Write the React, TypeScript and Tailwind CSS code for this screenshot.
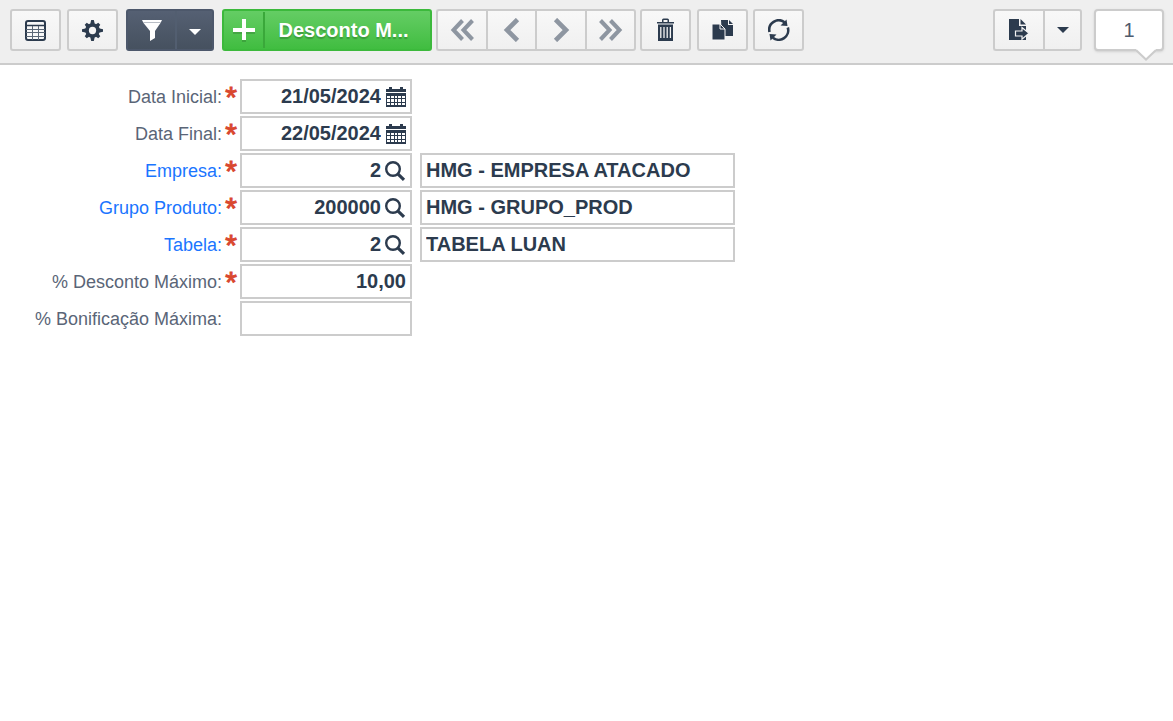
import type {ReactNode} from 'react';

const lightButton =
	'flex h-[42px] items-center justify-center border-2 border-[#ccc] bg-linear-to-b from-[#f8f8f8] to-[#f0f0f0] text-[#2c3b4e] hover:to-[#e4e4e4]';

function GridIcon() {
	return (
		<svg width="21" height="21" viewBox="0 0 21 21" fill="none" stroke="currentColor">
			<rect x="1" y="1" width="19" height="19" rx="2" fill="#f8f8f8" strokeWidth="2" />
			<path d="M1 5.5h19" strokeWidth="1.5" />
			<path d="M1 9.5h19M1 12.5h19M1 16.5h19M7.5 6v14M13.5 6v14" stroke="#5b6776" />
		</svg>
	);
}

function GearIcon() {
	return (
		<svg width="21" height="21" viewBox="0 0 22 22" fill="currentColor">
			{[0, 90].map((angle) => (
				<path key={angle} d="M9.6 0h2.8l1 4.5v13l-1 4.5H9.6l-1-4.5v-13z" transform={`rotate(${angle} 11 11)`} />
			))}
			{[45, 135].map((angle) => (
				<path key={angle} d="M9.5 1h3l.8 4.2v11.6l-.8 4.2h-3l-.8-4.2V5.2z" transform={`rotate(${angle} 11 11)`} />
			))}
			<circle cx="11" cy="11" r="7.6" />
			<circle cx="11" cy="11" r="3.8" fill="#f5f5f5" />
		</svg>
	);
}

function FunnelIcon() {
	return (
		<svg width="20" height="21" viewBox="0 0 20 21" fill="#fff">
			<path d="M0 0h20l-1 2H1zM1.5 3h17L13 11v7l-5 3V11z" />
			<path d="M1 2h18v1H1z" fill="#b9bec6" />
		</svg>
	);
}

function Caret() {
	return (
		<svg width="12" height="6" viewBox="0 0 12 6" fill="currentColor">
			<path d="M0 0h12L6 6z" />
		</svg>
	);
}

function PlusIcon() {
	return (
		<svg width="22" height="22" viewBox="0 0 22 22" fill="#fff" className="drop-shadow-[0_2px_0_rgba(0,0,0,0.15)]">
			<path d="M9 0h4v9h9v4h-9v8H9v-8H0V9h9z" />
		</svg>
	);
}

function Chevrons({double, flip}: {double?: boolean; flip?: boolean}) {
	return (
		<svg
			width="24"
			height="24"
			viewBox="0 0 24 24"
			fill="none"
			stroke="#8e96a1"
			strokeWidth={double ? 4 : 4.6}
			className={flip ? 'rotate-180' : ''}
		>
			{double ? <path d="M12.5 2.5L3.5 12l9 9.5M22.5 2.5l-9 9.5 9 9.5" /> : <path d="M17.5 1.5L7 12l10.5 10.5" />}
		</svg>
	);
}

function TrashIcon() {
	return (
		<svg width="18" height="24" viewBox="0 0 18 24" fill="currentColor">
			<path d="M5 4V2Q5 .5 6.5 .5h4Q12 .5 12 2v2h-1.5V2h-4v2z" />
			<path d="M0 4h17v1.5H0z" />
			<path d="M1 5.5h15V7H1z" fill="#8f98a3" />
			<path d="M1 7h15v16H1z" />
			<path d="M3.8 9v11M7 9v11M10.2 9v11M13.4 9v11" stroke="#f4f4f4" strokeWidth="1.3" />
		</svg>
	);
}

function CopyIcon() {
	return (
		<svg width="22" height="22" viewBox="0 0 22 22" fill="currentColor">
			<path d="M9 1h7v5h5v11H10z" />
			<path d="M17 1l4 4h-4z" />
			<path d="M0 5h8l5 5v11H0z" stroke="#f6f6f6" />
			<path d="M8 5v5h5" fill="none" stroke="#f6f6f6" />
		</svg>
	);
}

function RefreshIcon() {
	return (
		<svg width="22" height="22" viewBox="0 0 22 22" fill="currentColor">
			<path
				d="M1.5 13A9.5 9.5 0 0 1 16.5 3.3M19.8 8.5A9.5 9.5 0 0 1 4.8 18.7"
				fill="none"
				stroke="currentColor"
				strokeWidth="2.6"
			/>
			<path d="M18.5 .5l1 6.5-7-.6zM2.500 21.5l-1-6.5 7 .6z" />
		</svg>
	);
}

function ExportIcon() {
	return (
		<svg width="20" height="22" viewBox="0 0 20 22" fill="currentColor">
			<path d="M0 0h10v7h7v14H0z" />
			<path d="M11.5 0L17 5.5h-5.5z" />
			<path d="M6.5 12H13V8.5l7 5.8-7 5.8V17H6.500z" stroke="#f4f4f4" strokeWidth="1.2" />
		</svg>
	);
}

function CalendarIcon() {
	return (
		<svg width="20" height="20" viewBox="0 0 20 20" fill="currentColor">
			<path d="M3 0h3v2h8V0h3v2h3v3H0V2h3z" />
			<path d="M0 6h20v14H0z" />
			<path
				d="M1 9h3v2H1zM5 9h3v2H5zM9 9h2v2H9zM12 9h3v2h-3zM16 9h3v2h-3zM1 12h3v3H1zM5 12h3v3H5zM9 12h2v3H9zM12 12h3v3h-3zM16 12h3v3h-3zM1 16h3v2H1zM5 16h3v2H5zM9 16h2v2H9zM12 16h3v2h-3zM16 16h3v2h-3z"
				fill="#fff"
			/>
		</svg>
	);
}

function SearchIcon() {
	return (
		<svg width="21" height="20" viewBox="0 0 21 20" fill="none" stroke="currentColor">
			<circle cx="8" cy="8" r="6.8" strokeWidth="2.4" />
			<path d="M12.8 12.8l6.2 6" strokeWidth="3.2" />
		</svg>
	);
}

type FieldProps = {
	id: string;
	label: string;
	value: string;
	required?: boolean;
	link?: boolean;
	icon?: ReactNode;
	iconLabel?: string;
	description?: string;
};

function Field({id, label, value, required, link, icon, iconLabel, description}: FieldProps) {
	return (
		<div className="flex h-[35px] items-center">
			<label htmlFor={id} className="w-[222px] shrink-0 text-right text-lg text-[#5a6577]">
				{link ? (
					<a href={`#${id}`} className="text-[#1a75ff]">
						{label}
					</a>
				) : (
					label
				)}
			</label>
			<span className="flex h-full w-[18px] shrink-0 justify-center text-[30px] leading-9 text-[#d9472f] [-webkit-text-stroke:1px_#d9472f]">
				{required && '*'}
			</span>
			<div className="flex h-full w-[172px] shrink-0 items-center border-2 border-[#ccc] bg-white pr-1 text-[#2c3b4e]">
				<input
					id={id}
					defaultValue={value}
					className="h-full w-full min-w-0 text-right text-xl font-bold outline-none"
				/>
				{icon && (
					<button type="button" aria-label={iconLabel} className="ml-1 flex w-[21px] shrink-0 justify-end">
						{icon}
					</button>
				)}
			</div>
			{description && (
				<input
					readOnly
					aria-label={`${label} descrição`}
					value={description}
					className="ml-2 h-full w-[315px] min-w-0 border-2 border-[#ccc] bg-white px-1 text-xl font-bold text-[#2c3b4e] outline-none"
				/>
			)}
		</div>
	);
}

export default function App() {
	return (
		<div className="min-h-screen bg-white font-['Liberation_Sans',Arial,sans-serif]">
			<header className="flex h-[65px] items-start justify-between border-b-2 border-[#ccc] bg-[#efefef] pt-[9px] pr-[9px] pl-[10px]">
				<div className="flex">
					<button aria-label="Modo grade" className={`${lightButton} mr-1.5 w-[51px] rounded-[3px]`}>
						<GridIcon />
					</button>
					<button aria-label="Configurações" className={`${lightButton} mr-2 w-[51px] rounded-[3px]`}>
						<GearIcon />
					</button>
					<div className="mr-2 flex h-[42px] w-[88px] overflow-hidden rounded-[3px] border-2 border-[#4d586b] bg-linear-to-b from-[#556073] to-[#46515f] text-white">
						<button aria-label="Filtro" className="flex w-[49px] items-center justify-center border-r-2 border-[#525e70]">
							<FunnelIcon />
						</button>
						<button aria-label="Opções de filtro" className="flex flex-1 items-center justify-center pt-1">
							<Caret />
						</button>
					</div>
					<button className="mr-1 flex h-[42px] w-[210px] items-center rounded-[3px] border-2 border-[#3cb93c] bg-linear-to-b from-[#64cd64] to-[#40bd40] text-xl font-bold text-white">
						<span className="flex h-9 w-[41px] items-center justify-center border-r-2 border-[#3aa83a]">
							<PlusIcon />
						</span>
						<span className="flex-1 pr-2 text-center [text-shadow:0_2px_1px_rgba(0,0,0,0.2)]">Desconto M...</span>
					</button>
					<div className="mr-1 flex w-[200px]">
						<button aria-label="Primeiro" className={`${lightButton} w-[50px] rounded-l-[3px] border-r-0`}>
							<Chevrons double />
						</button>
						<button aria-label="Anterior" className={`${lightButton} w-[49px] border-r-0`}>
							<Chevrons />
						</button>
						<button aria-label="Próximo" className={`${lightButton} w-[50px] border-r-0`}>
							<Chevrons flip />
						</button>
						<button aria-label="Último" className={`${lightButton} w-[51px] rounded-r-[3px]`}>
							<Chevrons double flip />
						</button>
					</div>
					<button aria-label="Excluir" className={`${lightButton} mr-1.5 w-[51px] rounded-[3px]`}>
						<TrashIcon />
					</button>
					<button aria-label="Duplicar" className={`${lightButton} mr-[5px] w-[51px] rounded-[3px]`}>
						<CopyIcon />
					</button>
					<button aria-label="Atualizar" className={`${lightButton} w-[51px] rounded-[3px]`}>
						<RefreshIcon />
					</button>
				</div>

				<div className="flex gap-3">
					<div className="flex">
						<button aria-label="Exportar" className={`${lightButton} w-[50px] rounded-l-[3px] border-r-0`}>
							<ExportIcon />
						</button>
						<button aria-label="Opções de exportação" className={`${lightButton} w-[39px] rounded-r-[3px]`}>
							<Caret />
						</button>
					</div>
					<div className="relative flex h-[42px] w-[70px] items-center justify-center rounded-[4px] border-2 border-[#ccc] bg-white text-xl text-[#4f5b6d] shadow-sm">
						1
						<svg width="20" height="12" viewBox="0 0 20 12" className="absolute top-[38px] right-1.5">
							<path d="M0 0h20v1.5L10 10.5 0 1.5z" fill="#fff" />
							<path d="M0 1l10 9.5L20 1" fill="none" stroke="#ccc" strokeWidth="2" />
						</svg>
					</div>
				</div>
			</header>

			<form className="flex flex-col gap-0.5 pt-3.5">
				<Field id="data-inicial" label="Data Inicial:" value="21/05/2024" required icon={<CalendarIcon />} iconLabel="Abrir calendário" />
				<Field id="data-final" label="Data Final:" value="22/05/2024" required icon={<CalendarIcon />} iconLabel="Abrir calendário" />
				<Field id="empresa" label="Empresa:" value="2" required link icon={<SearchIcon />} iconLabel="Pesquisar" description="HMG - EMPRESA ATACADO" />
				<Field id="grupo-produto" label="Grupo Produto:" value="200000" required link icon={<SearchIcon />} iconLabel="Pesquisar" description="HMG - GRUPO_PROD" />
				<Field id="tabela" label="Tabela:" value="2" required link icon={<SearchIcon />} iconLabel="Pesquisar" description="TABELA LUAN" />
				<Field id="desconto-maximo" label="% Desconto Máximo:" value="10,00" required />
				<Field id="bonificacao-maxima" label="% Bonificação Máxima:" value="" />
			</form>
		</div>
	);
}
